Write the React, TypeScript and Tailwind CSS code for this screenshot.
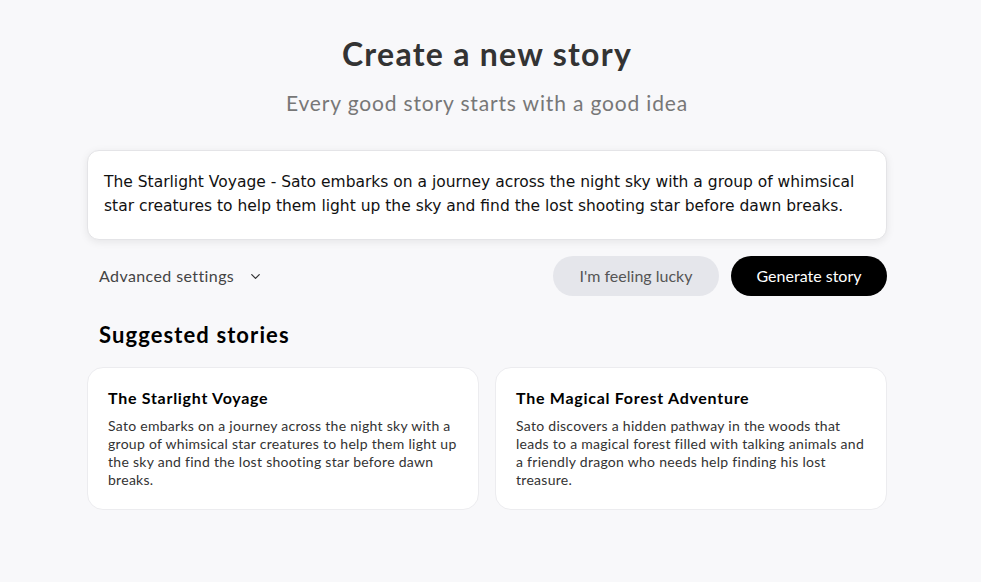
import React from 'react';
import { ChevronDown } from 'lucide-react';

const SUGGESTIONS = [
  {
    title: 'The Starlight Voyage',
    body: 'Sato embarks on a journey across the night sky with a group of whimsical star creatures to help them light up the sky and find the lost shooting star before dawn breaks.',
  },
  {
    title: 'The Magical Forest Adventure',
    body: 'Sato discovers a hidden pathway in the woods that leads to a magical forest filled with talking animals and a friendly dragon who needs help finding his lost treasure.',
  },
];

const App: React.FC = () => {
  return (
    <div className="min-h-screen bg-[#f8f8fa] pr-[7px] font-['Lato',sans-serif]">
      <div className="mx-auto w-[800px] pt-[33px]">
        <h1 className="text-center text-[32px] font-bold leading-[42px] tracking-[0.04em] text-[#333]">Create a new story</h1>
        <p className="mt-[14px] text-center text-[21px] leading-[28px] tracking-[0.04em] text-[#777]">Every good story starts with a good idea</p>

        <div className="mt-[33px] h-[90px] rounded-xl border border-[#e4e4e7] bg-white px-4 py-[19px] shadow-[0_2px_8px_rgba(0,0,0,0.08)]">
          <p className="font-['DejaVu_Sans',sans-serif] text-[15.5px] leading-[24px] text-[#111]">
            The Starlight Voyage - Sato embarks on a journey across the night sky with a group of whimsical star creatures to help them light up the sky and find the lost shooting star before dawn breaks.
          </p>
        </div>

        <div className="mt-[16px] flex items-center justify-between">
          <button className="ml-3 flex items-center gap-[14px] text-[16px] tracking-[0.025em] text-[#444]">
            Advanced settings
            <ChevronDown size={15} strokeWidth={2} className="text-[#333]" />
          </button>
          <div className="flex items-center gap-3">
            <button className="h-10 w-[166px] rounded-full bg-[#e5e6eb] text-[16px] text-[#555]">I&apos;m feeling lucky</button>
            <button className="h-10 w-[156px] rounded-full bg-black text-[16px] text-white">Generate story</button>
          </div>
        </div>

        <h2 className="ml-3 mt-[24px] text-[22px] font-bold leading-[30px] tracking-[0.05em] text-black">Suggested stories</h2>

        <div className="mt-[17px] grid grid-cols-2 gap-4">
          {SUGGESTIONS.map(s => (
            <div key={s.title} className="h-[143px] rounded-2xl border border-[#ececef] bg-white px-5 pt-[19px]">
              <h3 className="text-[16px] font-bold leading-[22px] tracking-[0.045em] text-black">{s.title}</h3>
              <p className="mt-[8px] text-[14px] leading-[18px] tracking-[0.02em] text-[#333]">{s.body}</p>
            </div>
          ))}
        </div>
      </div>
    </div>
  );
};

export default App;
